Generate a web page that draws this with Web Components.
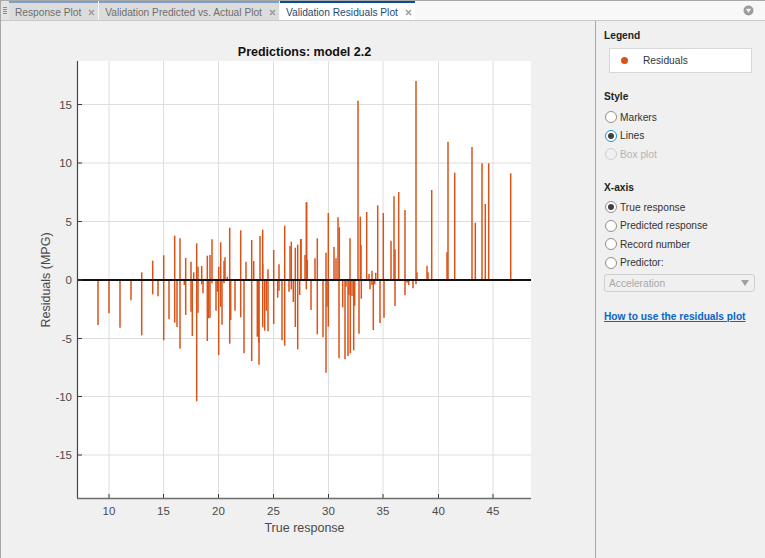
<!DOCTYPE html>
<html>
<head>
<meta charset="utf-8">
<title>Validation Residuals Plot</title>
<style>
   html, body { margin: 0; height: 100%; }
   body { font: 10.2px "Liberation Sans", Arial, sans-serif; background: #f0f0f0; overflow: hidden; }
</style>
</head>
<body>
<app-window>
   <tab-strip slot="tabs">
      <plot-tab>Response Plot</plot-tab>
      <plot-tab>Validation Predicted vs. Actual Plot</plot-tab>
      <plot-tab active>Validation Residuals Plot</plot-tab>
   </tab-strip>
   <residual-plot slot="plot"></residual-plot>
   <side-panel slot="panel"></side-panel>
</app-window>

<script>
class AppWindow extends HTMLElement {
   constructor() {
      super();
      this.attachShadow({ mode: "open" }).innerHTML = `
         <style>
            :host { display: grid; grid-template-rows: 20px 1fr; grid-template-columns: 1fr 170px; height: 558px; box-sizing: border-box; border-left: 1px solid #a8a8a8; border-top: 1px solid #a8a8a8; }
            .top { grid-column: 1 / 3; }
         </style>
         <div class="top"><slot name="tabs"></slot></div>
         <slot name="plot"></slot>
         <slot name="panel"></slot>
      `;
   }
}

class TabStrip extends HTMLElement {
   constructor() {
      super();
      this.attachShadow({ mode: "open" }).innerHTML = `
         <style>
            :host { display: flex; height: 20px; box-sizing: border-box; background: #f8f8f8; border-bottom: 1px solid #c8c8c8; }
            .grip { width: 8px; display: flex; flex-direction: column; gap: 1px; padding: 6px 0 0 2px; box-sizing: border-box; background: #e4e4e4; }
            .grip i { display: block; width: 4px; height: 1px; background: #8c8c8c; }
            .tabs { display: flex; gap: 1px; flex: 1; }
            .menu { width: 20px; margin-right: 7px; display: flex; align-items: center; justify-content: center; }
         </style>
         <div class="grip"><i></i><i></i><i></i><i></i></div>
         <div class="tabs"><slot></slot></div>
         <div class="menu">
            <svg width="11" height="11" viewBox="0 0 11 11">
               <circle cx="5.5" cy="5.5" r="5" fill="#9c9c9c"/>
               <path d="M2.8 3.8H8.2L5.5 7.8Z" fill="#f4f4f4"/>
            </svg>
         </div>
      `;
   }
}

class PlotTab extends HTMLElement {
   constructor() {
      super();
      this.attachShadow({ mode: "open" }).innerHTML = `
         <style>
            :host { display: flex; align-items: center; gap: 7px; padding: 1px 3px 0 6px; height: 19px; box-sizing: border-box; background: #dcdcdc; border-top: 2px solid #7f9fc8; color: #6e6e6e; font-size: 10.2px; white-space: nowrap; }
            :host([active]) { background: #fff; border-top-color: #0e4c92; color: #1f4a70; }
            svg { display: block; }
         </style>
         <slot></slot>
         <svg width="7" height="7" viewBox="0 0 7 7"><path d="M1 1L6 6M6 1L1 6" stroke="#9a9a9a" stroke-width="1.4"/></svg>
      `;
   }
}

// bar ends read off the reference at 3x, [x, y] in crop coordinates
const fromCrop = (ox, oy, list) => list.map(([x, y]) => [ox + x / 3, oy + y / 3]);

const BARS = [
   ...fromCrop(70, 240, [[84,255],[117,220],[150,263],[183,181],[215,286],[248,163],[264,169],[281,301],[297,238],[314,248],[321,261],[330,326],[347,225],[343,135],[363,215],[367,288],[380,484],[384,218],[395,133],[399,160],[412,303],[416,235],[420,233],[426,130],[438,212],[442,155],[446,345],[452,200],[456,254],[462,130],[479,311],[482,240],[495,212],[512,232],[522,340],[545,363],[562,290],[566,308],[567,374],[578,262],[584,272],[589,212],[594,274],[611,252],[623,173],[627,152],[636,301],[644,317],[657,155],[664,148],[670,186],[676,261],[683,328],[689,165]]),
   ...fromCrop(70, 240, [[215,97],[248,62],[281,46],[347,54],[363,65],[371,97],[380,10],[384,80],[395,78],[412,47],[420,45],[446,80],[452,7],[462,63],[465,52],[472,110],[528,65],[545,0],[551,63],[578,72],[594,88],[611,30],[627,73],[660,18],[664,5],[676,23],[683,14]]),
   ...fromCrop(70, 60, [[314,527],[330,535],[426,538],[479,503],[512,511],[570,528],[578,509],[644,497],[692,537],[710,427]]),
   ...fromCrop(300, 240, [[19,148],[33,210],[52,283],[69,292],[78,398],[81,200],[85,260],[117,355],[128,202],[135,358],[138,140],[144,348],[147,165],[151,340],[156,168],[161,331],[164,197],[177,281],[184,176],[210,148],[216,135],[220,270],[224,133],[240,249],[252,233],[285,198],[315,166],[321,128],[326,135],[339,145],[348,133]]),
   ...fromCrop(300, 240, [[15,45],[22,60],[45,55],[78,38],[102,21],[108,55],[183,15],[207,102],[216,92],[227,98],[273,2],[285,28],[351,97],[381,77],[384,97],[441,37]]),
   ...fromCrop(300, 60, [[3,537],[19,427],[52,535],[85,459],[114,472],[118,502],[150,535],[174,122],[181,470],[200,456],[233,436],[250,459],[282,409],[296,396],[315,450],[348,63],[395,390],[444,245],[464,338],[516,261],[526,488],[546,310],[556,432],[566,310],[632,340]]),
];

const X_TICKS = [[10,109],[15,163.5],[20,218.5],[25,273.5],[30,328.5],[35,383],[40,438.5],[45,493]];
const Y_TICKS = [[15,104.5],[10,163],[5,221.5],[0,280],[-5,338.5],[-10,396.5],[-15,455]];

class ResidualPlot extends HTMLElement {
   connectedCallback() {
      const left = 78, right = 531, top = 61, bottom = 498;
      let grid = "", ticks = "", labels = "", bars = "";
      for (const [v, x] of X_TICKS) {
         grid += `<line x1="${x}" x2="${x}" y1="${top}" y2="${bottom}"/>`;
         ticks += `<line x1="${x}" x2="${x}" y1="${bottom}" y2="${bottom - 4}"/>`;
         labels += `<text x="${x}" y="515" text-anchor="middle">${v}</text>`;
      }
      for (const [v, y] of Y_TICKS) {
         if (v != 0) grid += `<line x1="${left}" x2="${right}" y1="${y}" y2="${y}"/>`;
         ticks += `<line x1="${left}" x2="${left + 4}" y1="${y}" y2="${y}"/>`;
         labels += `<text x="72" y="${y + 4}" text-anchor="end">${v}</text>`;
      }
      for (const [x, y] of BARS) bars += `<line x1="${x.toFixed(1)}" x2="${x.toFixed(1)}" y1="280" y2="${y.toFixed(1)}"/>`;

      // svg is shifted by the window's 1px border so coordinates stay in page pixels
      this.attachShadow({ mode: "open" }).innerHTML = `
         <style>
            :host { display: block; min-width: 0; overflow: hidden; }
            svg { display: block; margin: -21px 0 0 -1px; font-family: "Liberation Sans", Arial, sans-serif; }
            .grid line { stroke: #dedede; stroke-width: 1; }
            .bars line { stroke: #d95319; stroke-width: 1.5; }
            .ticks line { stroke: #3c3c3c; stroke-width: 1; }
            .labels text { font-size: 11.5px; fill: #4a4a4a; }
            .title { font-size: 12.5px; font-weight: bold; fill: #111; }
            .axis { font-size: 12.5px; fill: #4a4a4a; }
         </style>
         <svg width="595" height="558" viewBox="0 0 595 558">
            <rect x="${left}" y="${top}" width="${right - left}" height="${bottom - top}" fill="#fff"/>
            <g class="grid">${grid}</g>
            <g class="bars">${bars}</g>
            <line x1="${left}" x2="${right}" y1="280" y2="280" stroke="#111" stroke-width="2"/>
            <g class="ticks">${ticks}</g>
            <line x1="77.5" x2="77.5" y1="${top}" y2="${bottom}" stroke="#444" stroke-width="1.2"/>
            <line x1="77" x2="${right}" y1="498.5" y2="498.5" stroke="#6c6c6c" stroke-width="1.5"/>
            <g class="labels">${labels}</g>
            <text class="title" x="304.5" y="56" text-anchor="middle">Predictions: model 2.2</text>
            <text class="axis" x="304.5" y="532" text-anchor="middle">True response</text>
            <text class="axis" transform="translate(50 280) rotate(-90)" text-anchor="middle">Residuals (MPG)</text>
         </svg>
      `;
   }
}

class RadioOption extends HTMLElement {
   constructor() {
      super();
      this.attachShadow({ mode: "open" }).innerHTML = `
         <style>
            :host { display: flex; align-items: center; gap: 3px; height: 18.6px; color: #333; }
            :host([disabled]) { color: #b4b4b4; }
            .dot { width: 12px; height: 12px; box-sizing: border-box; border-radius: 50%; border: 1px solid #8e8e8e; background: #fff; display: flex; align-items: center; justify-content: center; }
            :host([focused]) .dot { border-color: #1d8fe0; }
            :host([disabled]) .dot { border-color: #cfcfcf; background: #f0f0f0; }
            .dot i { display: none; width: 6px; height: 6px; border-radius: 50%; background: #404040; }
            :host([checked]) .dot i { display: block; }
         </style>
         <span class="dot"><i></i></span>
         <slot></slot>
      `;
   }
}

class SidePanel extends HTMLElement {
   constructor() {
      super();
      this.attachShadow({ mode: "open" }).innerHTML = `
         <style>
            :host { display: flex; flex-direction: column; box-sizing: border-box; padding: 8px 9px 0 8px; border-left: 1px solid #a8a8a8; color: #333; font-size: 10.2px; }
            h3 { margin: 0; font-size: 10.2px; line-height: 14px; color: #222; }
            .legend { margin: 5px 0 0 5px; width: 143px; height: 25px; box-sizing: border-box; background: #fff; border: 1px solid #d8d8d8; display: flex; align-items: center; padding: 0 0 1px 11px; gap: 15px; }
            .legend i { width: 7px; height: 7px; border-radius: 50%; background: #d95319; }
            .group { padding: 4px 0 0 1px; }
            .style { margin-top: 17px; }
            .xaxis { margin-top: 17px; }
            .xaxis + .group { padding-top: 3px; }
            .combo { margin-top: 2px; width: 151px; height: 18px; box-sizing: border-box; border: 1px solid #cfcfcf; border-radius: 3px; display: flex; align-items: center; justify-content: space-between; padding: 0 5px 0 4px; color: #a8a8a8; }
            .combo b { width: 0; height: 0; border: 4px solid transparent; border-top: 6px solid #a0a0a0; border-bottom: 0; }
            a { margin-top: 19px; color: #0a66c8; font-weight: bold; text-decoration: underline; }
         </style>
         <h3>Legend</h3>
         <div class="legend"><i></i><span>Residuals</span></div>
         <h3 class="style">Style</h3>
         <div class="group">
            <radio-option>Markers</radio-option>
            <radio-option checked focused>Lines</radio-option>
            <radio-option disabled>Box plot</radio-option>
         </div>
         <h3 class="xaxis">X-axis</h3>
         <div class="group">
            <radio-option checked>True response</radio-option>
            <radio-option>Predicted response</radio-option>
            <radio-option>Record number</radio-option>
            <radio-option>Predictor:</radio-option>
         </div>
         <div class="combo"><span>Acceleration</span><b></b></div>
         <a href="#">How to use the residuals plot</a>
      `;
   }
}

customElements.define("app-window", AppWindow);
customElements.define("tab-strip", TabStrip);
customElements.define("plot-tab", PlotTab);
customElements.define("residual-plot", ResidualPlot);
customElements.define("radio-option", RadioOption);
customElements.define("side-panel", SidePanel);
</script>
</body>
</html>
